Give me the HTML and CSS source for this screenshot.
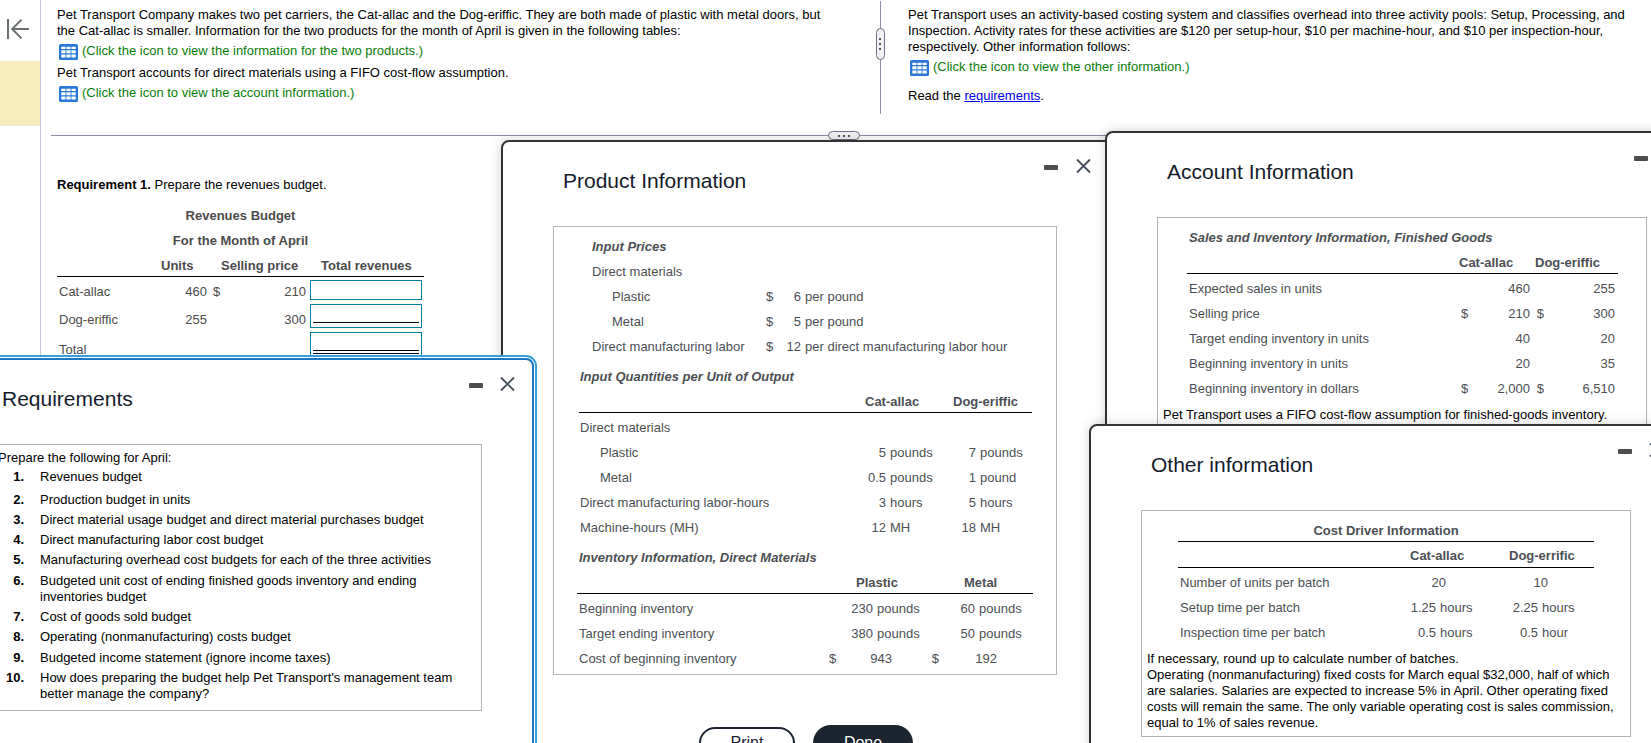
FILE: index.html
```html
<!DOCTYPE html>
<html lang="en">
<head>
<meta charset="utf-8">
<title>Pet Transport Company</title>
<link rel="stylesheet" href="styles.css">
</head>
<body>
<svg width="0" height="0" class="defs">
  <symbol id="grid" viewBox="0 0 19 16">
    <rect width="19" height="16" rx="1.5" fill="#2878d8"/>
    <path fill="#fff" d="M2.300 2.700h4.200v2.300H2.300zM7.400 2.700h4.200v2.300H7.400zM12.500 2.700h4.200v2.300h-4.200zM2.300 6.300h4.200v3H2.300zM7.400 6.300h4.200v3H7.400zM12.500 6.300h4.200v3h-4.200zM2.300 10.600h4.200v3H2.300zM7.400 10.600h4.200v3H7.400zM12.500 10.600h4.200v3h-4.200z"/>
  </symbol>
  <symbol id="close" viewBox="0 0 15 14"><path d="M1 .5 14 13.500M14 .5 1 13.500" stroke="#454f5b" stroke-width="1.900" fill="none"/></symbol>
</svg>
<div class="page">
  <aside class="rail">
    <svg class="collapse" width="24" height="22" viewBox="0 0 24 22"><path d="M2 1v20M23 11H6.500M15.500 1.600 6.200 11l9.300 9.400" fill="none" stroke="#6a7070" stroke-width="2"/></svg>
    <div class="mark"></div>
  </aside>
  <main class="main">
    <section class="top">
      <div class="col left">
        <p>Pet Transport Company makes two pet carriers, the Cat-allac and the Dog-eriffic. They are both made of plastic with metal doors, but<br>the Cat-allac is smaller. Information for the two products for the month of April is given in the following tables:</p>
        <div class="click"><svg width="19" height="16"><use href="#grid"/></svg>(Click the icon to view the information for the two products.)</div>
        <p>Pet Transport accounts for direct materials using a FIFO cost-flow assumption.</p>
        <div class="click second"><svg width="19" height="16"><use href="#grid"/></svg>(Click the icon to view the account information.)</div>
      </div>
      <div class="vsplit"><span class="vhandle"><i></i><i></i><i></i></span></div>
      <div class="col right">
        <p>Pet Transport uses an activity-based costing system and classifies overhead into three activity pools: Setup, Processing, and<br>Inspection. Activity rates for these activities are $120 per setup-hour, $10 per machine-hour, and $10 per inspection-hour,<br>respectively. Other information follows:</p>
        <div class="click"><svg width="19" height="16"><use href="#grid"/></svg>(Click the icon to view the other information.)</div>
        <p class="read">Read the <a href="#">requirements</a>.</p>
      </div>
    </section>
    <div class="hsplit"><span class="hhandle"><i></i><i></i><i></i></span></div>
    <section class="work">
      <p><b>Requirement 1.</b> Prepare the revenues budget.</p>
      <div class="budget">
        <div class="cap">Revenues Budget</div>
        <div class="cap">For the Month of April</div>
        <div class="brow bhead"><b></b><b class="c">Units</b><b class="c sp">Selling price</b><b class="c tr">Total revenues</b></div>
        <div class="brow r1"><span>Cat-allac</span><span class="r">460</span><span class="money"><i>$</i>210</span><span class="box"></span></div>
        <div class="brow r2"><span>Dog-eriffic</span><span class="r">255</span><span class="money">300</span><span class="box tall"><u></u></span></div>
        <div class="brow r3"><span>Total</span><span></span><span></span><span class="box tall"><u class="dbl"></u></span></div>
      </div>
    </section>
  </main>
</div>

<section class="win product">
  <header><h2>Product Information</h2><span class="min"></span><svg class="x" width="15" height="14"><use href="#close"/></svg></header>
  <div class="frame">
    <div class="prices">
      <div class="row hd">Input Prices</div>
      <div class="row">Direct materials</div>
      <div class="row"><span class="ind">Plastic</span><span>$</span><span class="r">6</span><span class="u">per pound</span></div>
      <div class="row"><span class="ind">Metal</span><span>$</span><span class="r">5</span><span class="u">per pound</span></div>
      <div class="row"><span>Direct manufacturing labor</span><span>$</span><span class="r">12</span><span class="u">per direct manufacturing labor hour</span></div>
    </div>
    <div class="quant">
      <div class="row hd">Input Quantities per Unit of Output</div>
      <div class="row th"><b class="q1">Cat-allac</b><b>Dog-eriffic</b></div>
      <div class="row">Direct materials</div>
      <div class="row"><span class="ind">Plastic</span><span class="r">5</span><span class="u">pounds</span><span class="r">7</span><span class="u">pounds</span></div>
      <div class="row"><span class="ind">Metal</span><span class="r">0.5</span><span class="u">pounds</span><span class="r">1</span><span class="u">pound</span></div>
      <div class="row"><span>Direct manufacturing labor-hours</span><span class="r">3</span><span class="u">hours</span><span class="r">5</span><span class="u">hours</span></div>
      <div class="row"><span>Machine-hours (MH)</span><span class="r">12</span><span class="u">MH</span><span class="r">18</span><span class="u">MH</span></div>
    </div>
    <div class="inv">
      <div class="row hd">Inventory Information, Direct Materials</div>
      <div class="row th"><b class="q1">Plastic</b><b>Metal</b></div>
      <div class="row"><span>Beginning inventory</span><span></span><span class="r">230</span><span class="u">pounds</span><span></span><span class="r">60</span><span class="u">pounds</span></div>
      <div class="row"><span>Target ending inventory</span><span></span><span class="r">380</span><span class="u">pounds</span><span></span><span class="r">50</span><span class="u">pounds</span></div>
      <div class="row cost"><span>Cost of beginning inventory</span><span>$</span><span class="r">943</span><span>$</span><span class="r">192</span></div>
    </div>
  </div>
  <footer><button class="print">Print</button><button class="done">Done</button></footer>
</section>

<section class="win account">
  <header><h2>Account Information</h2><span class="min"></span></header>
  <div class="frame">
    <div class="sales">
      <div class="row hd">Sales and Inventory Information, Finished Goods</div>
      <div class="row th"><b class="q1">Cat-allac</b><b>Dog-eriffic</b></div>
      <div class="row"><span>Expected sales in units</span><span></span><span class="r">460</span><span></span><span class="r">255</span></div>
      <div class="row"><span>Selling price</span><span>$</span><span class="r">210</span><span>$</span><span class="r">300</span></div>
      <div class="row"><span>Target ending inventory in units</span><span></span><span class="r">40</span><span></span><span class="r">20</span></div>
      <div class="row"><span>Beginning inventory in units</span><span></span><span class="r">20</span><span></span><span class="r">35</span></div>
      <div class="row"><span>Beginning inventory in dollars</span><span>$</span><span class="r">2,000</span><span>$</span><span class="r">6,510</span></div>
    </div>
    <p class="note">Pet Transport uses a FIFO cost-flow assumption for finished-goods inventory.</p>
  </div>
</section>

<section class="win other">
  <header><h2>Other information</h2><span class="min"></span><svg class="x" width="15" height="14"><use href="#close"/></svg></header>
  <div class="frame">
    <div class="driver">
      <div class="row ttl">Cost Driver Information</div>
      <div class="row th"><b class="q1">Cat-allac</b><b>Dog-errific</b></div>
      <div class="row"><span>Number of units per batch</span><span class="r">20</span><span></span><span class="r">10</span></div>
      <div class="row hrs"><span>Setup time per batch</span><span class="r">1.25</span><span class="u">hours</span><span class="r">2.25</span><span class="u">hours</span></div>
      <div class="row hrs"><span>Inspection time per batch</span><span class="r">0.5</span><span class="u">hours</span><span class="r">0.5</span><span class="u">hour</span></div>
    </div>
    <p class="note">If necessary, round up to calculate number of batches.<br>Operating (nonmanufacturing) fixed costs for March equal $32,000, half of which<br>are salaries. Salaries are expected to increase 5% in April. Other operating fixed<br>costs will remain the same. The only variable operating cost is sales commission,<br>equal to 1% of sales revenue.</p>
  </div>
</section>

<section class="win reqs">
  <header><h2>Requirements</h2><span class="min"></span><svg class="x" width="15" height="14"><use href="#close"/></svg></header>
  <div class="frame">
    <p>Prepare the following for April:</p>
    <ol>
      <li><b>1.</b><span>Revenues budget</span></li>
      <li class="gap"><b>2.</b><span>Production budget in units</span></li>
      <li><b>3.</b><span>Direct material usage budget and direct material purchases budget</span></li>
      <li><b>4.</b><span>Direct manufacturing labor cost budget</span></li>
      <li><b>5.</b><span>Manufacturing overhead cost budgets for each of the three activities</span></li>
      <li class="g1"><b>6.</b><span>Budgeted unit cost of ending finished goods inventory and ending<br>inventories budget</span></li>
      <li><b>7.</b><span>Cost of goods sold budget</span></li>
      <li><b>8.</b><span>Operating (nonmanufacturing) costs budget</span></li>
      <li class="g1"><b>9.</b><span>Budgeted income statement (ignore income taxes)</span></li>
      <li><b>10.</b><span>How does preparing the budget help Pet Transport's management team<br>better manage the company?</span></li>
    </ol>
  </div>
</section>
</body>
</html>
```
FILE: styles.css
```css
* { box-sizing: border-box; }
html { overflow: hidden; }
body { margin: 0; width: 1651px; height: 743px; overflow: hidden; position: relative; background: #fff; color: #000; font: 13px/16px "Liberation Sans", Arial, sans-serif; }
p, h2, ol { margin: 0; padding: 0; }
i { font-style: normal; }
.defs { position: absolute; }
.page { display: flex; height: 743px; }
.rail { width: 41px; flex: none; border-right: 1px solid #c3cad9; padding-top: 18px; }
.collapse { display: block; margin-left: 6px; }
.mark { height: 65px; margin-top: 21px; background: #f8ebbd; border-bottom: 1px solid #eee8d8; }
.main { flex: 1; padding-left: 10px; }
.top { display: flex; height: 131px; }
.col { padding-top: 7px; white-space: nowrap; }
.left { width: 824px; padding-left: 6px; }
.right { padding-left: 23px; }
.click { display: flex; color: #0a7d0a; height: 26px; padding: 4px 0 0 2px; gap: 4px; }
.click svg { margin-top: 1px; flex: none; }
.click.second { height: 20px; }
.read { margin-top: 7px; }
a { color: #00e; }
.vsplit { width: 10px; display: flex; flex-direction: column; align-items: center; height: 113px; margin-top: 1px; background: linear-gradient(#8a8fa3, #8a8fa3) 5px 0 / 1px 100% no-repeat; }
.vhandle { margin-top: 27px; width: 9px; height: 32px; border: 1px solid #6d7385; border-radius: 5px; background: #f0f2f6; display: flex; flex-direction: column; gap: 3px; align-items: center; justify-content: center; }
.vhandle i, .hhandle i { width: 2px; height: 2px; background: #555; }
.hsplit { height: 9px; display: flex; padding-left: 777px; background: linear-gradient(#8a8fa3, #8a8fa3) 0 4px / 100% 1px no-repeat; }
.hhandle { width: 32px; height: 9px; border: 1px solid #6d7385; border-radius: 5px; background: #f0f2f6; display: flex; gap: 3px; align-items: center; justify-content: center; }
.work { padding: 37px 0 0 6px; }
.budget { width: 367px; color: #4b4b4b; margin-top: 10px; }
.cap { height: 25px; line-height: 25px; font-weight: bold; text-align: center; }
.brow { display: grid; grid-template-columns: 102px 48px 99px 118px; height: 28px; line-height: 22px; }
.brow > span:first-child { padding-left: 2px; }
.bhead { height: 24px; line-height: 25px; border-bottom: 1px solid #000; }
.bhead .c { white-space: nowrap; padding-left: 2px; }
.bhead .sp { padding-left: 14px; }
.bhead .tr { padding-left: 15px; }
.r { text-align: right; }
.money { display: flex; justify-content: flex-end; }
.money i { margin-right: auto; padding-left: 6px; }
.box { margin: 3px 0 0 4px; width: 112px; height: 20px; border: 1px solid #007fa3; }
.box.tall { height: 24px; margin-top: 0; padding: 17px 2px 0; }
.box u { display: block; height: 1px; background: #000; }
.box u.dbl { height: 4px; background: none; border: solid #000; border-width: 1px 0; }
.r1 { height: 27px; line-height: 29px; }
.r2 { line-height: 31px; }
.r3 { line-height: 36px; }

.win { position: absolute; background: #fff; border: 2px solid #333; border-radius: 8px; box-shadow: 0 0 12px rgba(0,0,0,.18); color: #4b4f54; }
.win header { display: flex; position: relative; }
h2 { font-size: 21px; line-height: 24px; font-weight: normal; color: #141b2b; white-space: nowrap; }
.min { width: 14px; height: 5px; background: #4d4d4d; border-radius: 1px; position: absolute; }
.x { position: absolute; }
.frame { border: 1px solid #b3b3b3; }
.row { height: 25px; line-height: 25px; display: grid; white-space: nowrap; }
.hd { font-weight: bold; font-style: italic; }
.th { height: 24px; border-bottom: 1px solid #000; }
.ind { padding-left: 20px; }
.u { padding-left: 4px; }
.note { color: #000; white-space: nowrap; }

.product { left: 501px; top: 140px; width: 620px; height: 640px; }
.product header { padding: 27px 0 0 60px; height: 84px; }
.product .min { left: 541px; top: 23px; }
.product .x { left: 573px; top: 17px; }
.product .frame { margin-left: 50px; width: 504px; height: 449px; padding: 7px 0 0; }
.prices { padding-left: 38px; }
.prices .row { grid-template-columns: 174px 7px 28px 1fr; }
.quant { padding-left: 26px; margin-top: 5px; }
.quant .row:not(.th):not(.hd) { grid-template-columns: 279px 27px 49px 41px 1fr; }
.quant .th { width: 453px; margin: 0 0 2px -1px; grid-template-columns: 374px 1fr; }
.quant .q1 { padding-left: 286px; }
.inv { padding-left: 25px; margin-top: 5px; }
.inv .row { grid-template-columns: 250px 7px 37px 60px 13px 29px 1fr; }
.inv .row.hd { grid-template-columns: 1fr; }
.inv .row.th { width: 456px; margin: 0 0 2px -2px; grid-template-columns: 387px 1fr; }
.inv .q1 { padding-left: 279px; }
.inv .row.cost { grid-template-columns: 250px 7px 56px 47px 58px; }
.inv .cost span:nth-child(4) { text-align: right; }
footer { display: flex; margin: 50px 0 0 196px; gap: 18px; align-items: flex-start; }
button { font: 16px "Liberation Sans", Arial, sans-serif; padding: 0; border-radius: 18px; }
.print { width: 96px; height: 32px; margin-top: 2px; border: 2px solid #1c2430; background: #fff; color: #1c2430; }
.done { width: 100px; height: 36px; border: 0; background: #1c2430; color: #fff; }

.account { left: 1105px; top: 131px; width: 640px; height: 520px; }
.account header { padding: 27px 0 0 60px; height: 84px; }
.account .min { left: 527px; top: 23px; }
.account .frame { margin-left: 50px; width: 490px; height: 300px; padding-top: 7px; }
.sales { padding-left: 31px; }
.sales .row { grid-template-columns: 272px 7px 62px 14px 71px; }
.sales .row.hd { grid-template-columns: 1fr; }
.sales .row.th { width: 431px; margin: 0 0 2px -2px; grid-template-columns: 348px 1fr; }
.sales .q1 { padding-left: 272px; }
.account .sales span:nth-child(4) { text-align: right; }
.account .note { padding-left: 5px; margin-top: 6px; }

.other { left: 1089px; top: 424px; width: 620px; height: 400px; }
.other header { padding: 27px 0 0 60px; height: 84px; }
.other .min { left: 527px; top: 23px; }
.other .x { left: 558px; top: 17px; }
.other .frame { margin-left: 50px; width: 490px; height: 227px; padding-top: 8px; }
.driver { padding-left: 36px; width: 452px; }
.driver .ttl { text-align: center; font-weight: bold; border-bottom: 1px solid #000; height: 23px; line-height: 23px; }
.driver .row.th { height: 26px; line-height: 28px; grid-template-columns: 331px 1fr; margin-bottom: 2px; }
.driver .q1 { padding-left: 232px; }
.driver .row:not(.th):not(.ttl) { grid-template-columns: 230px 36px 35px 67px 1fr; padding-left: 2px; }
.driver .row.hrs:not(.th) { grid-template-columns: 230px 26px 36px 66px 1fr; }
.other .note { padding-left: 5px; margin-top: 6px; }

.reqs { left: -58px; top: 358px; width: 592px; height: 460px; border-color: #1977c4; box-shadow: 0 0 0 1px #fff, 0 0 0 3px #359fdc; }
.reqs header { padding: 27px 0 0 58px; height: 84px; }
.reqs .min { left: 525px; top: 23px; }
.reqs .x { left: 556px; top: 17px; }
.reqs .frame { margin-left: 50px; width: 488px; height: 267px; padding: 5px 0 0 3px; color: #000; }
ol { list-style: none; }
li { display: flex; gap: 16px; margin-top: 4px; white-space: nowrap; }
ol li:first-child { margin-top: 3px; }
li b { width: 26px; text-align: right; }
li.gap { margin-top: 7px; }
li.g1 { margin-top: 5px; }
```
